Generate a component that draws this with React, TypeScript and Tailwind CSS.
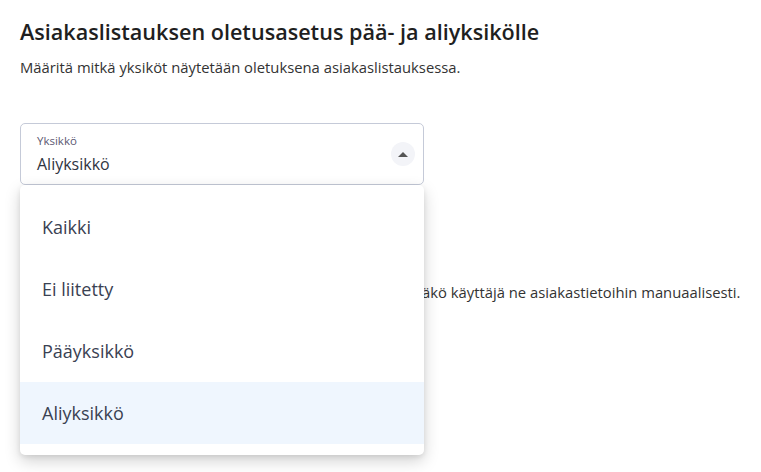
const options = ['Kaikki', 'Ei liitetty', 'Pääyksikkö', 'Aliyksikkö'];

export default function App() {
  const selected = 'Aliyksikkö';

  return (
    <div
      className="min-h-[472px] w-[761px] bg-white px-5 pt-[15px] text-[#212121]"
      style={{ fontFamily: '"Open Sans", "Noto Sans", sans-serif' }}
    >
      <h1 className="text-[21.6px] font-semibold leading-[34px] text-[#1f1f1f]">
        Asiakaslistauksen oletusasetus pää- ja aliyksikölle
      </h1>
      <p className="mt-[8px] text-[14.8px] leading-[21px] text-[#333]">
        Määritä mitkä yksiköt näytetään oletuksena asiakaslistauksessa.
      </p>

      {/* Select with open menu */}
      <div className="relative mt-[45px] w-[404px]">
        <div className="flex h-[62px] items-center justify-between rounded-[5px] border border-[#c5cad8] pl-4 pr-[8px]">
          <div className="flex flex-col">
            <span className="text-[11.5px] leading-4 text-[#5b5872]">Yksikkö</span>
            <span className="mt-[3px] text-[16px] leading-6 text-[#2f3441]">{selected}</span>
          </div>
          <div className="flex h-6 w-6 items-center justify-center rounded-full bg-[#f3f4f8]">
            <svg width="12" height="6" viewBox="0 0 12 6">
              <path d="M1 6 L6 1 L11 6 Z" fill="#555" />
            </svg>
          </div>
        </div>

        <div className="absolute left-0 top-[62px] z-10 w-[404px] rounded-[5px] bg-white py-[11px] shadow-[0_6px_16px_rgba(0,0,0,0.18),0_2px_5px_rgba(0,0,0,0.08)]">
          {options.map((o) => (
            <div
              key={o}
              className={`flex h-[62px] items-center pl-[22px] text-[18px] text-[#3a4152] ${
                o === selected ? 'bg-[#eff6fe]' : ''
              }`}
            >
              {o}
            </div>
          ))}
        </div>
      </div>

      {/* Paragraph below, its start is covered by the open menu */}
      <p className="mt-[97px] whitespace-nowrap pl-[402px] text-[14.8px] leading-[21px] text-[#333]">
        äkö käyttäjä ne asiakastietoihin manuaalisesti.
      </p>
    </div>
  );
}
